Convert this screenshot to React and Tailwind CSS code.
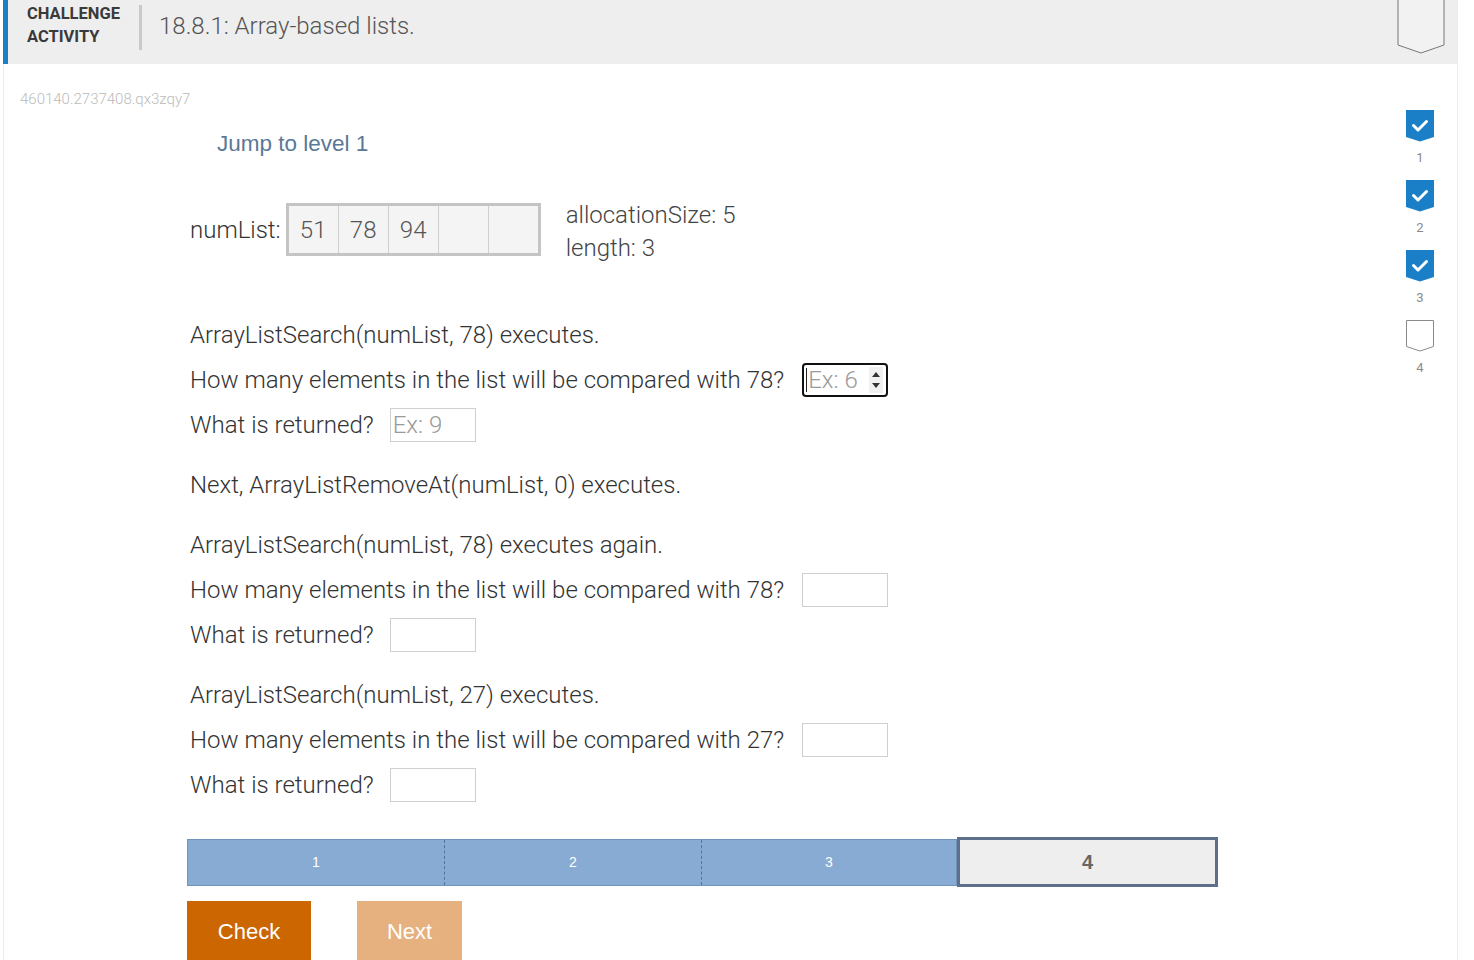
import React from "react";

function Bookmark({ checked, className = "" }) {
  return (
    <svg width="28" height="32" viewBox="0 0 28 32" className={className}>
      {checked ? (
        <>
          <path d="M0 0 H28 V27 L14 31.5 L0 27 Z" fill="#1a7fc7" />
          <path d="M7.5 15.5 L12 20 L20.5 11.5" fill="none" stroke="#fff" strokeWidth="3" strokeLinecap="round" strokeLinejoin="round" />
        </>
      ) : (
        <path d="M0.5 0.5 H27.5 V26.5 L14 31 L0.5 26.5 Z" fill="#fff" stroke="#8a8a8a" strokeWidth="1" />
      )}
    </svg>
  );
}

function Level({ n, checked }) {
  return (
    <div className="flex flex-col items-center h-[70px]">
      <Bookmark checked={checked} />
      <div className="text-[13px] leading-[15px] text-[#8a8a8a] mt-[8px]" style={{ fontFamily: "Roboto, sans-serif" }}>{n}</div>
    </div>
  );
}

function Box({ placeholder }) {
  return (
    <div className="w-[86px] h-[34px] border border-[#cfcfcf] bg-white flex items-center px-[2px] text-[24px] font-light text-[#9a9a9a] leading-none">
      {placeholder}
    </div>
  );
}

function FocusBox() {
  return (
    <div className="w-[86px] h-[34px] border-2 border-[#111] rounded-[4px] bg-white flex items-center pl-[2px] pr-[3px] text-[24px] font-light text-[#9a9a9a] leading-none">
      <span className="w-[1px] h-[24px] bg-[#222] mr-[1px]" />
      <span className="flex-1">Ex: 6</span>
      <svg width="14" height="26" viewBox="0 0 14 26">
        <rect x="0" y="0" width="14" height="26" fill="#f0f0f0" />
        <path d="M3 10 L7 5 L11 10 Z" fill="#333" />
        <path d="M3 16 L7 21 L11 16 Z" fill="#333" />
      </svg>
    </div>
  );
}

function Row({ children }) {
  return <div className="h-[45px] flex items-center">{children}</div>;
}

export default function App() {
  const cells = ["51", "78", "94", "", ""];
  return (
    <div className="w-[1474px] h-[960px] overflow-hidden bg-white" style={{ fontFamily: "Roboto, 'Liberation Sans', sans-serif" }}>
      <div className="ml-[3px] w-[1455px] h-[960px] border-l border-r border-[#ececec] flex flex-col">
        {/* header */}
        <div className="h-[64px] bg-[#eeeeee] border-l-[5px] border-[#1a7fc7] -ml-[1px] flex items-start relative shrink-0">
          <div className="pl-[19px] pt-[2px] text-[16.5px] leading-[23px] font-bold text-[#3a3a3a] w-[131px]">
            <div>CHALLENGE</div>
            <div>ACTIVITY</div>
          </div>
          <div className="mt-[5px] w-[3px] h-[45px] bg-[#c9c9c9]" />
          <div className="pl-[17px] pt-[11px] text-[24px] leading-[30px] text-[#555] font-light">18.8.1: Array-based lists.</div>
          <svg width="48" height="55" viewBox="0 0 48 55" className="absolute left-[1389px] top-0">
            <path d="M1 -1 V45 L24 53 L47 45 V-1" fill="#f2f2f2" stroke="#777" strokeWidth="1" />
          </svg>
        </div>
        {/* body */}
        <div className="flex flex-1">
          <div className="flex-1">
            <div className="pl-[16px] pt-[27px] text-[15px] leading-[17px] text-[#bbbbbb] font-light">460140.2737408.qx3zqy7</div>
            <div className="pl-[213px] mt-[23px] text-[22.5px] leading-[26px] text-[#5b7896]" style={{ fontFamily: "'Liberation Sans', Arial, sans-serif" }}>Jump to level 1</div>
            <div className="pl-[186px] font-light text-[24px] text-[#333]">
              <div className="mt-[46px] flex items-center h-[53px]">
                <span className="mr-[5px]">numList:</span>
                <div className="flex border-[3px] border-[#c4c4c4] bg-[#f4f4f4] h-[53px]">
                  {cells.map((c, i) => (
                    <div key={i} className={`flex items-center justify-center text-[#555] ${i < 4 ? "w-[50px] border-r border-[#cfcfcf]" : "w-[49px]"}`}>{c}</div>
                  ))}
                </div>
                <div className="ml-[25px] pt-[5px] flex flex-col leading-[33px] text-[#444]">
                  <span>allocationSize: 5</span>
                  <span>length: 3</span>
                </div>
              </div>
              <div className="mt-[56px]">
                <Row>ArrayListSearch(numList, 78) executes.</Row>
                <Row><span className="mr-[18px]">How many elements in the list will be compared with 78?</span><FocusBox /></Row>
                <Row><span className="mr-[16px]">What is returned?</span><Box placeholder="Ex: 9" /></Row>
              </div>
              <div className="mt-[15px]">
                <Row>Next, ArrayListRemoveAt(numList, 0) executes.</Row>
              </div>
              <div className="mt-[15px]">
                <Row>ArrayListSearch(numList, 78) executes again.</Row>
                <Row><span className="mr-[18px]">How many elements in the list will be compared with 78?</span><Box /></Row>
                <Row><span className="mr-[16px]">What is returned?</span><Box /></Row>
              </div>
              <div className="mt-[15px]">
                <Row>ArrayListSearch(numList, 27) executes.</Row>
                <Row><span className="mr-[18px]">How many elements in the list will be compared with 27?</span><Box /></Row>
                <Row><span className="mr-[16px]">What is returned?</span><Box /></Row>
              </div>
            </div>
            {/* progress */}
            <div className="ml-[183px] mt-[32px] flex w-[1031px] h-[48px]" style={{ fontFamily: "'Liberation Sans', Arial, sans-serif" }}>
              <div className="flex w-[770px] h-[47px] border border-[#6f93bb] bg-[#87abd3] text-white text-[14px]">
                <div className="w-[257px] flex items-center justify-center border-r border-dashed border-[#4d739e]">1</div>
                <div className="w-[257px] flex items-center justify-center border-r border-dashed border-[#4d739e]">2</div>
                <div className="flex-1 flex items-center justify-center">3</div>
              </div>
              <div className="-mt-[2px] flex-1 h-[50px] border-[3px] border-[#5d6f8b] bg-[#eeeeee] flex items-center justify-center text-[20px] font-bold text-[#666]">4</div>
            </div>
            <div className="ml-[183px] mt-[14px] flex gap-[46px] text-[22px] text-white" style={{ fontFamily: "'Liberation Sans', Arial, sans-serif" }}>
              <div className="w-[124px] h-[62px] bg-[#cc6600] flex items-center justify-center pb-[2px]">Check</div>
              <div className="w-[105px] h-[62px] bg-[#e6b17f] flex items-center justify-center pb-[2px]">Next</div>
            </div>
          </div>
          <div className="w-[80px] flex flex-col items-center pt-[46px]">
            <div className="relative left-[3px] flex flex-col">
              <Level n="1" checked />
              <Level n="2" checked />
              <Level n="3" checked />
              <Level n="4" />
            </div>
          </div>
        </div>
      </div>
    </div>
  );
}
